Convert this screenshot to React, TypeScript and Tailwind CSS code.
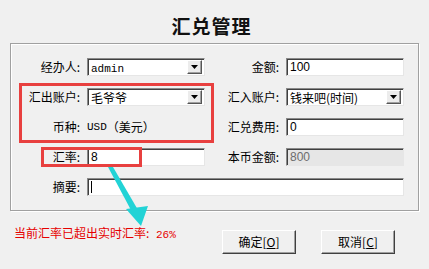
import React from 'react';

const cjk = "font-['Noto_Sans_CJK_SC',sans-serif]";
const sunken =
  'h-[18px] bg-white border border-t-[#8a8a8a] border-l-[#8a8a8a] border-b-[#e6e6e6] border-r-[#e6e6e6] shadow-[inset_1px_1px_0_#404040] flex items-center pl-[3px] overflow-hidden';

const Label: React.FC<{ children: React.ReactNode }> = ({ children }) => (
  <div className={`h-[18px] flex items-center justify-end text-[12px] text-black whitespace-nowrap ${cjk}`}>
    {children}
  </div>
);

const Select: React.FC<{ children: React.ReactNode }> = ({ children }) => (
  <div className={`${sunken} justify-between pr-[2px]`}>
    <span className="whitespace-nowrap leading-[14px]">{children}</span>
    <div className="w-[15px] h-[14px] bg-[#ececec] border border-t-white border-l-white border-b-[#555] border-r-[#555] shadow-[inset_-1px_-1px_0_#a0a0a0] flex items-center justify-center shrink-0">
      <svg width="7" height="4" viewBox="0 0 7 4">
        <polygon points="0,0 7,0 3.5,4" fill="#000" />
      </svg>
    </div>
  </div>
);

const Btn: React.FC<{ label: string; hot: string }> = ({ label, hot }) => (
  <button className={`w-[74px] h-[24px] bg-[#f0f0f0] border border-t-white border-l-white border-b-[#404040] border-r-[#404040] shadow-[inset_-1px_-1px_0_#a0a0a0] text-[12px] text-black flex items-center justify-center ${cjk}`}>
    {label}[<span className="underline">{hot}</span>]
  </button>
);

export default function App() {
  return (
    <div className={`relative w-[429px] h-[269px] bg-[#f0f0f0] overflow-hidden ${cjk}`}>
      <div className="h-[43px] pt-[13px] pr-[6px] text-center text-[19px] leading-[26px] font-bold tracking-[1px] text-[#111]">
        汇兑管理
      </div>

      <div className="ml-[10px] w-[409px] h-[168px] border border-[#a0a0a0] shadow-[inset_1px_1px_0_#fff,1px_1px_0_#fff] pt-[14px]">
        <div className="grid grid-cols-[69px_118px_67px_118px] gap-x-[7px] gap-y-[12px]">
          <Label>经办人:</Label>
          <Select>
            <span className="font-['Liberation_Mono',monospace] text-[11px]">admin</span>
          </Select>
          <Label>金额:</Label>
          <div className={sunken}>
            <span className="font-['Liberation_Sans',sans-serif] text-[12px]">100</span>
          </div>

          <Label>汇出账户:</Label>
          <Select>
            <span className="text-[12px]">毛爷爷</span>
          </Select>
          <Label>汇入账户:</Label>
          <Select>
            <span className="text-[12px]">钱来吧(时间)</span>
          </Select>

          <Label>币种:</Label>
          <div className="h-[18px] flex items-center text-[12px] whitespace-nowrap">
            <span className="font-['Liberation_Mono',monospace] text-[11px]">USD</span>
            <span>（美元）</span>
          </div>
          <Label>汇兑费用:</Label>
          <div className={sunken}>
            <span className="font-['Liberation_Sans',sans-serif] text-[12px]">0</span>
          </div>

          <Label>汇率:</Label>
          <div className={sunken}>
            <span className="font-['Liberation_Sans',sans-serif] text-[12px]">8</span>
          </div>
          <Label>本币金额:</Label>
          <div className={`${sunken} !bg-[#e6e6e6]`}>
            <span className="font-['Liberation_Sans',sans-serif] text-[12px] text-[#6d6d6d]">800</span>
          </div>

          <Label>摘要:</Label>
          <div className={`${sunken} col-span-3`}>
            <span className="w-px h-[12px] bg-black" />
          </div>
        </div>
      </div>

      <div className="flex items-start mt-[15px]">
        <div className="pl-[14px] w-[222px] text-[12px] leading-[14px] text-[#e60000] whitespace-nowrap">
          当前汇率已超出实时汇率:<span className="font-['Liberation_Mono',monospace] text-[11px]"> 26%</span>
        </div>
        <div className="flex gap-[25px] mt-[4px]">
          <Btn label="确定" hot="O" />
          <Btn label="取消" hot="C" />
        </div>
      </div>

      {/* annotation overlay */}
      <div className="absolute left-[19px] top-[83px] w-[195px] h-[60px] border-[3px] border-[#e8403f]" />
      <div className="absolute left-[41px] top-[147px] w-[101px] h-[20px] border-[3px] border-[#e8403f]" />
      <svg className="absolute left-0 top-0" width="429" height="269" viewBox="0 0 429 269">
        <polygon points="108,167 113,167 138,210 132,212" fill="#22d3d6" />
        <polygon points="126,209 148,206 141,226" fill="#22d3d6" />
      </svg>
    </div>
  );
}
